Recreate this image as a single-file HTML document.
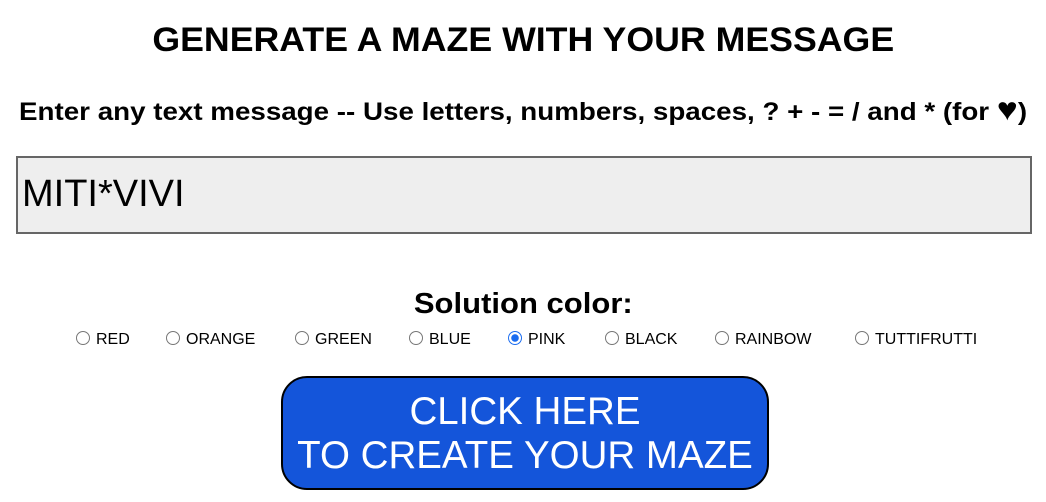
<!DOCTYPE html>
<html><head><meta charset="utf-8"><style>
body{margin:0;width:1046px;height:502px;background:#fff;font-family:"Liberation Sans",sans-serif;position:relative;overflow:hidden;color:#000}
.a{position:absolute;white-space:nowrap}
.t{left:0;width:1046px;text-align:center;font-weight:bold}
.t>span{display:inline-block}
.r{position:absolute;top:330px;font-size:16px;line-height:16px}
.r i{display:inline-block;width:14px;height:14px;border:1px solid #777;border-radius:50%;vertical-align:top;margin-top:1px;margin-right:6px;box-sizing:border-box}
.r i.on{border:1.5px solid #1a6cf0;background:radial-gradient(circle,#1a6cf0 0 3.5px,#fff 4px)}
.r span{display:inline-block;margin-top:2px}
</style></head><body>
<div class="a t" style="top:19px;font-size:34px;line-height:42px"><span style="transform:scaleX(1.05)">GENERATE A MAZE WITH YOUR MESSAGE</span></div>
<div class="a t" style="top:96px;font-size:25px;line-height:32px"><span style="transform:scaleX(1.11)">Enter any text message -- Use letters, numbers, spaces, ? + - = / and * (for <span style="font-size:32px;line-height:20px">&#9829;</span>)</span></div>
<div class="a" style="left:16px;top:156px;width:1016px;height:78px;box-sizing:border-box;border:2px solid #666;background:#eee"></div>
<div class="a" style="left:22px;top:174px;font-size:38px;line-height:40px">MITI*VIVI</div>
<div class="a t" style="top:287px;font-size:29px;line-height:34px"><span style="transform:scaleX(1.07)">Solution color:</span></div>
<div class="r" style="left:76px"><i></i><span>RED</span></div>
<div class="r" style="left:166px"><i></i><span>ORANGE</span></div>
<div class="r" style="left:295px"><i></i><span>GREEN</span></div>
<div class="r" style="left:409px"><i></i><span>BLUE</span></div>
<div class="r" style="left:508px"><i class="on"></i><span>PINK</span></div>
<div class="r" style="left:605px"><i></i><span>BLACK</span></div>
<div class="r" style="left:715px"><i></i><span>RAINBOW</span></div>
<div class="r" style="left:855px"><i></i><span>TUTTIFRUTTI</span></div>
<div class="a" style="left:281px;top:376px;width:488px;height:114px;box-sizing:border-box;border:2px solid #000;border-radius:26px;background:#1455da;color:#fff;text-align:center;font-size:38.5px;line-height:44px;padding-top:12px">CLICK HERE<br>TO CREATE YOUR MAZE</div>
</body></html>
